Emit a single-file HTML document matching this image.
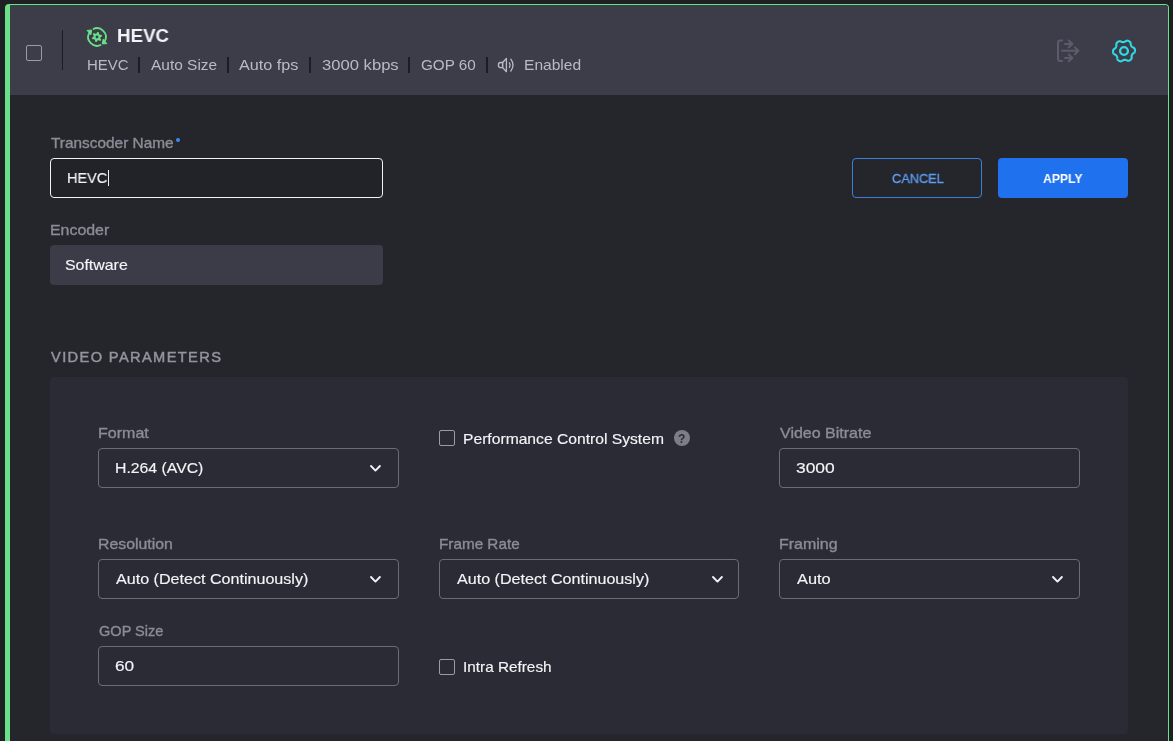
<!DOCTYPE html>
<html><head><meta charset="utf-8"><style>
html,body{margin:0;padding:0;width:1173px;height:741px;overflow:hidden;background:#1f2023;}
.abs{position:absolute;}
.t{position:absolute;white-space:nowrap;line-height:1.117;transform-origin:0 0;will-change:transform;font-family:"Liberation Sans",sans-serif;}
</style></head><body>
<div class="abs" style="left:5px;top:4px;width:1164px;height:760px;box-sizing:border-box;border-top:1px solid #6ae089;border-left:5px solid #6ae089;border-right:1px solid #6ae089;border-radius:4px 4px 0 0;background:#25262b;overflow:hidden">
  <div class="abs" style="left:0;top:0;right:0;height:90px;background:#3d3d4a"></div>
</div>
<!-- header items -->
<div class="abs" style="left:26px;top:45px;width:16px;height:16px;box-sizing:border-box;border:1.5px solid #9b9ba6;border-radius:2px"></div>
<div class="abs" style="left:62px;top:30px;width:1px;height:40px;background:#1c1c21"></div>
<div class="abs" style="left:138px;top:57px;width:2px;height:16px;background:#1c1c21"></div><div class="abs" style="left:227px;top:57px;width:2px;height:16px;background:#1c1c21"></div><div class="abs" style="left:309px;top:57px;width:2px;height:16px;background:#1c1c21"></div><div class="abs" style="left:408px;top:57px;width:2px;height:16px;background:#1c1c21"></div><div class="abs" style="left:486px;top:57px;width:2px;height:16px;background:#1c1c21"></div>
<svg class="abs" style="left:82px;top:22px" width="30" height="30" viewBox="0 0 30 30">
<g fill="none" stroke="#6ae089" stroke-width="1.75" stroke-linecap="butt">
<path d="M10.87 7.23 A8.8 8.8 0 0 1 22.77 19.13"/>
<path d="M19.13 22.77 A8.8 8.8 0 0 1 7.23 10.87"/>
</g>
<path d="M21.2 17.2 L24.9 21.6 L20.3 21.9 Z" fill="#6ae089" stroke="#6ae089" stroke-width="1" stroke-linejoin="round"/>
<path d="M8.8 12.8 L5.1 8.4 L9.7 8.1 Z" fill="#6ae089" stroke="#6ae089" stroke-width="1" stroke-linejoin="round"/>
<path d="M18.86 15.00 L18.75 15.07 L18.67 15.13 L18.61 15.19 L18.57 15.25 L18.54 15.31 L18.52 15.37 L18.50 15.43 L18.48 15.49 L18.47 15.55 L18.45 15.61 L18.44 15.67 L18.42 15.73 L18.41 15.79 L18.40 15.85 L18.38 15.91 L18.37 15.97 L18.35 16.03 L18.34 16.09 L18.33 16.15 L18.32 16.21 L18.32 16.27 L18.32 16.34 L18.33 16.41 L18.36 16.49 L18.40 16.59 L18.47 16.69 L18.55 16.81 L18.66 16.95 L18.78 17.09 L18.89 17.24 L18.98 17.39 L19.04 17.53 L19.08 17.65 L19.09 17.76 L19.09 17.86 L19.07 17.95 L19.03 18.04 L19.00 18.12 L18.95 18.20 L18.90 18.27 L18.85 18.34 L18.79 18.41 L18.73 18.48 L18.67 18.54 L18.60 18.60 L18.54 18.66 L18.47 18.72 L18.39 18.77 L18.31 18.81 L18.23 18.85 L18.14 18.88 L18.04 18.89 L17.93 18.89 L17.80 18.86 L17.66 18.80 L17.51 18.72 L17.35 18.62 L17.20 18.52 L17.05 18.42 L16.93 18.34 L16.82 18.28 L16.72 18.24 L16.64 18.22 L16.57 18.22 L16.50 18.22 L16.44 18.23 L16.38 18.24 L16.32 18.26 L16.26 18.28 L16.20 18.29 L16.14 18.31 L16.08 18.33 L16.02 18.35 L15.96 18.36 L15.91 18.38 L15.85 18.40 L15.79 18.42 L15.73 18.44 L15.67 18.46 L15.61 18.48 L15.56 18.51 L15.50 18.54 L15.44 18.59 L15.38 18.65 L15.33 18.74 L15.27 18.85 L15.21 18.98 L15.14 19.15 L15.08 19.32 L15.00 19.49 L14.92 19.64 L14.83 19.76 L14.75 19.86 L14.66 19.93 L14.57 19.97 L14.47 20.00 L14.38 20.01 L14.29 20.02 L14.20 20.02 L14.12 20.01 L14.03 20.00 L13.94 19.99 L13.85 19.97 L13.77 19.95 L13.68 19.92 L13.60 19.89 L13.51 19.86 L13.43 19.82 L13.36 19.78 L13.28 19.72 L13.21 19.66 L13.15 19.58 L13.10 19.48 L13.06 19.35 L13.04 19.21 L13.03 19.03 L13.04 18.85 L13.05 18.66 L13.07 18.49 L13.07 18.34 L13.07 18.22 L13.05 18.12 L13.03 18.03 L13.00 17.97 L12.96 17.91 L12.92 17.86 L12.88 17.81 L12.84 17.77 L12.79 17.73 L12.75 17.68 L12.70 17.64 L12.66 17.60 L12.61 17.56 L12.57 17.52 L12.52 17.48 L12.48 17.43 L12.43 17.39 L12.39 17.35 L12.34 17.31 L12.29 17.27 L12.24 17.24 L12.18 17.20 L12.11 17.18 L12.03 17.16 L11.93 17.15 L11.80 17.16 L11.65 17.17 L11.48 17.20 L11.30 17.22 L11.11 17.24 L10.94 17.25 L10.79 17.24 L10.67 17.21 L10.56 17.16 L10.48 17.11 L10.41 17.04 L10.35 16.97 L10.30 16.90 L10.26 16.82 L10.22 16.74 L10.18 16.66 L10.15 16.58 L10.12 16.49 L10.10 16.41 L10.08 16.32 L10.06 16.23 L10.05 16.14 L10.04 16.05 L10.04 15.96 L10.05 15.87 L10.07 15.78 L10.11 15.69 L10.17 15.59 L10.26 15.50 L10.38 15.40 L10.52 15.31 L10.69 15.23 L10.85 15.14 L11.01 15.07 L11.14 15.00 L11.25 14.93 L11.33 14.87 L11.39 14.81 L11.43 14.75 L11.46 14.69 L11.48 14.63 L11.50 14.57 L11.52 14.51 L11.53 14.45 L11.55 14.39 L11.56 14.33 L11.58 14.27 L11.59 14.21 L11.60 14.15 L11.62 14.09 L11.63 14.03 L11.65 13.97 L11.66 13.91 L11.67 13.85 L11.68 13.79 L11.68 13.73 L11.68 13.66 L11.67 13.59 L11.64 13.51 L11.60 13.41 L11.53 13.31 L11.45 13.19 L11.34 13.05 L11.22 12.91 L11.11 12.76 L11.02 12.61 L10.96 12.47 L10.92 12.35 L10.91 12.24 L10.91 12.14 L10.93 12.05 L10.97 11.96 L11.00 11.88 L11.05 11.80 L11.10 11.73 L11.15 11.66 L11.21 11.59 L11.27 11.52 L11.33 11.46 L11.40 11.40 L11.46 11.34 L11.53 11.28 L11.61 11.23 L11.69 11.19 L11.77 11.15 L11.86 11.12 L11.96 11.11 L12.07 11.11 L12.20 11.14 L12.34 11.20 L12.49 11.28 L12.65 11.38 L12.80 11.48 L12.95 11.58 L13.07 11.66 L13.18 11.72 L13.28 11.76 L13.36 11.78 L13.43 11.78 L13.50 11.78 L13.56 11.77 L13.62 11.76 L13.68 11.74 L13.74 11.72 L13.80 11.71 L13.86 11.69 L13.92 11.67 L13.98 11.65 L14.04 11.64 L14.09 11.62 L14.15 11.60 L14.21 11.58 L14.27 11.56 L14.33 11.54 L14.39 11.52 L14.44 11.49 L14.50 11.46 L14.56 11.41 L14.62 11.35 L14.67 11.26 L14.73 11.15 L14.79 11.02 L14.86 10.85 L14.92 10.68 L15.00 10.51 L15.08 10.36 L15.17 10.24 L15.25 10.14 L15.34 10.07 L15.43 10.03 L15.53 10.00 L15.62 9.99 L15.71 9.98 L15.80 9.98 L15.88 9.99 L15.97 10.00 L16.06 10.01 L16.15 10.03 L16.23 10.05 L16.32 10.08 L16.40 10.11 L16.49 10.14 L16.57 10.18 L16.64 10.22 L16.72 10.28 L16.79 10.34 L16.85 10.42 L16.90 10.52 L16.94 10.65 L16.96 10.79 L16.97 10.97 L16.96 11.15 L16.95 11.34 L16.93 11.51 L16.93 11.66 L16.93 11.78 L16.95 11.88 L16.97 11.97 L17.00 12.03 L17.04 12.09 L17.08 12.14 L17.12 12.19 L17.16 12.23 L17.21 12.27 L17.25 12.32 L17.30 12.36 L17.34 12.40 L17.39 12.44 L17.43 12.48 L17.48 12.52 L17.52 12.57 L17.57 12.61 L17.61 12.65 L17.66 12.69 L17.71 12.73 L17.76 12.76 L17.82 12.80 L17.89 12.82 L17.97 12.84 L18.07 12.85 L18.20 12.84 L18.35 12.83 L18.52 12.80 L18.70 12.78 L18.89 12.76 L19.06 12.75 L19.21 12.76 L19.33 12.79 L19.44 12.84 L19.52 12.89 L19.59 12.96 L19.65 13.03 L19.70 13.10 L19.74 13.18 L19.78 13.26 L19.82 13.34 L19.85 13.42 L19.88 13.51 L19.90 13.59 L19.92 13.68 L19.94 13.77 L19.95 13.86 L19.96 13.95 L19.96 14.04 L19.95 14.13 L19.93 14.22 L19.89 14.31 L19.83 14.41 L19.74 14.50 L19.62 14.60 L19.48 14.69 L19.31 14.77 L19.15 14.86 L18.99 14.93 L18.86 15.00Z" fill="#6ae089"/>
<circle cx="15" cy="15" r="1.45" fill="#3d3d4a"/>
</svg>
<svg class="abs" style="left:492px;top:52px" width="30" height="26" viewBox="0 0 30 26">
<g fill="none" stroke="#b9b9c8" stroke-width="1.3" stroke-linecap="round" stroke-linejoin="round">
<path d="M10.6 10.5 H8.6 Q6.4 10.5 6.4 13.05 Q6.4 15.6 8.6 15.6 H10.6 Z"/><path d="M10.6 10.5 L14.4 6.5 V19.7 L10.6 15.6 Z"/>
<path d="M17.4 10.9 Q18.9 13.1 17.4 15.3"/>
<path d="M18.8 7.2 Q23.2 13.1 18.8 19"/>
</g></svg>
<svg class="abs" style="left:1052px;top:36px" width="32" height="30" viewBox="0 0 32 30">
<g fill="none" stroke="#5b5b6b" stroke-width="2" stroke-linecap="round" stroke-linejoin="round">
<path d="M10 4.6 H8 Q6 4.6 6 6.6 V22.9 Q6 24.9 8 24.9 H10"/>
<path d="M13 7.9 H20.4 M16.8 4.5 L20.4 7.9 L16.8 11.3"/>
<path d="M10 14.8 H26.4 M22.9 11.4 L26.4 14.8 L22.9 18.2"/>
<path d="M13 21.9 H20.4 M16.8 18.5 L20.4 21.9 L16.8 25.3"/>
</g></svg>
<svg class="abs" style="left:1108px;top:35px" width="32" height="32" viewBox="0 0 32 32">
<path d="M26.97 16.00 L26.95 16.19 L26.92 16.38 L26.88 16.57 L26.83 16.76 L26.76 16.94 L26.68 17.12 L26.57 17.30 L26.44 17.47 L26.29 17.63 L26.12 17.79 L25.94 17.93 L25.74 18.07 L25.54 18.20 L25.35 18.33 L25.17 18.46 L25.00 18.58 L24.85 18.71 L24.71 18.83 L24.60 18.96 L24.49 19.09 L24.39 19.22 L24.30 19.35 L24.22 19.49 L24.14 19.63 L24.07 19.76 L24.00 19.90 L23.93 20.04 L23.87 20.18 L23.81 20.33 L23.75 20.48 L23.70 20.63 L23.66 20.79 L23.62 20.95 L23.60 21.12 L23.58 21.31 L23.57 21.50 L23.58 21.71 L23.59 21.93 L23.61 22.16 L23.63 22.40 L23.64 22.64 L23.64 22.88 L23.62 23.11 L23.59 23.33 L23.53 23.53 L23.46 23.72 L23.37 23.90 L23.26 24.07 L23.15 24.22 L23.03 24.37 L22.89 24.51 L22.76 24.65 L22.61 24.77 L22.46 24.89 L22.31 25.01 L22.15 25.12 L21.99 25.22 L21.83 25.32 L21.66 25.42 L21.49 25.50 L21.31 25.58 L21.13 25.65 L20.95 25.71 L20.76 25.76 L20.57 25.79 L20.37 25.81 L20.16 25.80 L19.95 25.78 L19.73 25.73 L19.52 25.66 L19.30 25.57 L19.08 25.47 L18.86 25.37 L18.66 25.26 L18.46 25.17 L18.27 25.08 L18.08 25.02 L17.91 24.96 L17.73 24.92 L17.57 24.90 L17.41 24.88 L17.25 24.87 L17.09 24.86 L16.93 24.86 L16.78 24.87 L16.62 24.88 L16.47 24.89 L16.31 24.91 L16.16 24.93 L16.00 24.95 L15.84 24.99 L15.68 25.03 L15.52 25.08 L15.36 25.14 L15.19 25.22 L15.02 25.31 L14.84 25.42 L14.66 25.54 L14.47 25.67 L14.27 25.81 L14.07 25.94 L13.86 26.06 L13.66 26.15 L13.45 26.23 L13.24 26.29 L13.04 26.32 L12.84 26.33 L12.65 26.33 L12.45 26.30 L12.26 26.27 L12.07 26.23 L11.89 26.17 L11.71 26.11 L11.53 26.04 L11.35 25.97 L11.18 25.89 L11.01 25.80 L10.84 25.71 L10.67 25.61 L10.51 25.50 L10.36 25.39 L10.21 25.27 L10.06 25.14 L9.93 25.00 L9.80 24.85 L9.69 24.68 L9.59 24.50 L9.51 24.31 L9.44 24.10 L9.39 23.88 L9.36 23.64 L9.34 23.40 L9.32 23.16 L9.31 22.93 L9.29 22.71 L9.26 22.50 L9.23 22.31 L9.19 22.13 L9.14 21.96 L9.08 21.81 L9.02 21.66 L8.94 21.51 L8.87 21.37 L8.79 21.24 L8.71 21.11 L8.62 20.98 L8.53 20.85 L8.44 20.72 L8.35 20.60 L8.25 20.48 L8.14 20.36 L8.02 20.24 L7.90 20.13 L7.76 20.02 L7.61 19.91 L7.45 19.81 L7.26 19.71 L7.07 19.61 L6.86 19.51 L6.64 19.41 L6.43 19.30 L6.22 19.18 L6.03 19.05 L5.86 18.91 L5.71 18.76 L5.58 18.60 L5.47 18.43 L5.38 18.26 L5.30 18.08 L5.24 17.90 L5.18 17.71 L5.13 17.53 L5.10 17.34 L5.07 17.15 L5.04 16.96 L5.03 16.77 L5.02 16.58 L5.01 16.38 L5.02 16.19 L5.03 16.00 L5.05 15.81 L5.08 15.62 L5.12 15.43 L5.17 15.24 L5.24 15.06 L5.32 14.88 L5.43 14.70 L5.56 14.53 L5.71 14.37 L5.88 14.21 L6.06 14.07 L6.26 13.93 L6.46 13.80 L6.65 13.67 L6.83 13.54 L7.00 13.42 L7.15 13.29 L7.29 13.17 L7.40 13.04 L7.51 12.91 L7.61 12.78 L7.70 12.65 L7.78 12.51 L7.86 12.37 L7.93 12.24 L8.00 12.10 L8.07 11.96 L8.13 11.82 L8.19 11.67 L8.25 11.52 L8.30 11.37 L8.34 11.21 L8.38 11.05 L8.40 10.88 L8.42 10.69 L8.43 10.50 L8.42 10.29 L8.41 10.07 L8.39 9.84 L8.37 9.60 L8.36 9.36 L8.36 9.12 L8.38 8.89 L8.41 8.67 L8.47 8.47 L8.54 8.28 L8.63 8.10 L8.74 7.93 L8.85 7.78 L8.97 7.63 L9.11 7.49 L9.24 7.35 L9.39 7.23 L9.54 7.11 L9.69 6.99 L9.85 6.88 L10.01 6.78 L10.17 6.68 L10.34 6.58 L10.51 6.50 L10.69 6.42 L10.87 6.35 L11.05 6.29 L11.24 6.24 L11.43 6.21 L11.63 6.19 L11.84 6.20 L12.05 6.22 L12.27 6.27 L12.48 6.34 L12.70 6.43 L12.92 6.53 L13.14 6.63 L13.34 6.74 L13.54 6.83 L13.73 6.92 L13.92 6.98 L14.09 7.04 L14.27 7.08 L14.43 7.10 L14.59 7.12 L14.75 7.13 L14.91 7.14 L15.07 7.14 L15.22 7.13 L15.38 7.12 L15.53 7.11 L15.69 7.09 L15.84 7.07 L16.00 7.05 L16.16 7.01 L16.32 6.97 L16.48 6.92 L16.64 6.86 L16.81 6.78 L16.98 6.69 L17.16 6.58 L17.34 6.46 L17.53 6.33 L17.73 6.19 L17.93 6.06 L18.14 5.94 L18.34 5.85 L18.55 5.77 L18.76 5.71 L18.96 5.68 L19.16 5.67 L19.35 5.67 L19.55 5.70 L19.74 5.73 L19.93 5.77 L20.11 5.83 L20.29 5.89 L20.47 5.96 L20.65 6.03 L20.82 6.11 L20.99 6.20 L21.16 6.29 L21.33 6.39 L21.49 6.50 L21.64 6.61 L21.79 6.73 L21.94 6.86 L22.07 7.00 L22.20 7.15 L22.31 7.32 L22.41 7.50 L22.49 7.69 L22.56 7.90 L22.61 8.12 L22.64 8.36 L22.66 8.60 L22.68 8.84 L22.69 9.07 L22.71 9.29 L22.74 9.50 L22.77 9.69 L22.81 9.87 L22.86 10.04 L22.92 10.19 L22.98 10.34 L23.06 10.49 L23.13 10.63 L23.21 10.76 L23.29 10.89 L23.38 11.02 L23.47 11.15 L23.56 11.28 L23.65 11.40 L23.75 11.52 L23.86 11.64 L23.98 11.76 L24.10 11.87 L24.24 11.98 L24.39 12.09 L24.55 12.19 L24.74 12.29 L24.93 12.39 L25.14 12.49 L25.36 12.59 L25.57 12.70 L25.78 12.82 L25.97 12.95 L26.14 13.09 L26.29 13.24 L26.42 13.40 L26.53 13.57 L26.62 13.74 L26.70 13.92 L26.76 14.10 L26.82 14.29 L26.87 14.47 L26.90 14.66 L26.93 14.85 L26.96 15.04 L26.97 15.23 L26.98 15.42 L26.99 15.62 L26.98 15.81 L26.97 16.00Z" fill="none" stroke="#2fd8e3" stroke-width="2.1" stroke-linejoin="round"/>
<circle cx="16" cy="16" r="3.9" fill="none" stroke="#2fd8e3" stroke-width="2.3"/></svg>
<!-- form -->
<div class="abs" style="left:175.7px;top:137.7px;width:4px;height:4px;border-radius:50%;background:#3b8af5"></div>
<div class="abs" style="left:50px;top:158px;width:333px;height:40px;box-sizing:border-box;border:1.5px solid #f2f2f6;border-radius:4px;background:#222328"></div>
<div class="abs" style="left:108px;top:170px;width:1.2px;height:16px;background:#f2f2f6"></div>
<div class="abs" style="left:50px;top:245px;width:333px;height:40px;border-radius:4px;background:#3c3c48"></div>
<div class="abs" style="left:852px;top:158px;width:130px;height:40px;box-sizing:border-box;border:1.3px solid #3d7fd8;border-radius:4px"></div>
<div class="abs" style="left:998px;top:158px;width:130px;height:40px;border-radius:4px;background:#2071ee"></div>
<!-- panel -->
<div class="abs" style="left:50px;top:377px;width:1078px;height:357px;border-radius:4px;background:#2b2b35"></div>
<div class="abs" style="left:98px;top:448px;width:301px;height:40px;box-sizing:border-box;border:1.2px solid #6c6c79;border-radius:4px"></div>
<svg class="abs" style="left:369.4px;top:463.6px" width="14" height="10" viewBox="0 0 14 10"><path d="M2 2 L6.45 6.6 L10.9 2" fill="none" stroke="#f0f0f5" stroke-width="1.9" stroke-linecap="round" stroke-linejoin="round"/></svg>
<div class="abs" style="left:779px;top:448px;width:301px;height:40px;box-sizing:border-box;border:1.2px solid #6c6c79;border-radius:4px"></div>
<div class="abs" style="left:98px;top:559px;width:301px;height:40px;box-sizing:border-box;border:1.2px solid #6c6c79;border-radius:4px"></div>
<svg class="abs" style="left:369.4px;top:574.6px" width="14" height="10" viewBox="0 0 14 10"><path d="M2 2 L6.45 6.6 L10.9 2" fill="none" stroke="#f0f0f5" stroke-width="1.9" stroke-linecap="round" stroke-linejoin="round"/></svg>
<div class="abs" style="left:439px;top:559px;width:300px;height:40px;box-sizing:border-box;border:1.2px solid #6c6c79;border-radius:4px"></div>
<svg class="abs" style="left:710.8px;top:574.6px" width="14" height="10" viewBox="0 0 14 10"><path d="M2 2 L6.45 6.6 L10.9 2" fill="none" stroke="#f0f0f5" stroke-width="1.9" stroke-linecap="round" stroke-linejoin="round"/></svg>
<div class="abs" style="left:779px;top:559px;width:301px;height:40px;box-sizing:border-box;border:1.2px solid #6c6c79;border-radius:4px"></div>
<svg class="abs" style="left:1051.2px;top:574.6px" width="14" height="10" viewBox="0 0 14 10"><path d="M2 2 L6.45 6.6 L10.9 2" fill="none" stroke="#f0f0f5" stroke-width="1.9" stroke-linecap="round" stroke-linejoin="round"/></svg>
<div class="abs" style="left:98px;top:646px;width:301px;height:40px;box-sizing:border-box;border:1.2px solid #6c6c79;border-radius:4px"></div>
<div class="abs" style="left:439px;top:430px;width:16px;height:16px;box-sizing:border-box;border:1.5px solid #9b9ba6;border-radius:2px"></div><div class="abs" style="left:439px;top:659px;width:16px;height:16px;box-sizing:border-box;border:1.5px solid #9b9ba6;border-radius:2px"></div><div class="abs" style="left:674px;top:430.3px;width:16px;height:16px;border-radius:50%;background:#7d7d89"></div>
<div class="t" style="left:678.3px;top:433.34px;font-size:12px;font-weight:bold;color:#2b2b35">?</div>
<div class="t" style="left:117.41px;top:24.80px;font-size:19px;font-weight:bold;color:#f4f4f8;transform:scaleX(0.9853);letter-spacing:0px;">HEVC</div>
<div class="t" style="left:86.87px;top:56.98px;font-size:14.5px;font-weight:normal;color:#b9b9c8;transform:scaleX(1.0306);letter-spacing:0px;">HEVC</div>
<div class="t" style="left:150.70px;top:56.98px;font-size:14.5px;font-weight:normal;color:#b9b9c8;transform:scaleX(1.0661);letter-spacing:0px;">Auto Size</div>
<div class="t" style="left:239.40px;top:56.98px;font-size:14.5px;font-weight:normal;color:#b9b9c8;transform:scaleX(1.1162);letter-spacing:0px;">Auto fps</div>
<div class="t" style="left:321.50px;top:56.98px;font-size:14.5px;font-weight:normal;color:#b9b9c8;transform:scaleX(1.1460);letter-spacing:0px;">3000 kbps</div>
<div class="t" style="left:420.50px;top:56.98px;font-size:14.5px;font-weight:normal;color:#b9b9c8;transform:scaleX(1.0512);letter-spacing:0px;">GOP 60</div>
<div class="t" style="left:523.63px;top:56.98px;font-size:14.5px;font-weight:normal;color:#b9b9c8;transform:scaleX(1.0738);letter-spacing:0px;">Enabled</div>
<div class="t" style="left:51.10px;top:135.08px;font-size:14.5px;font-weight:normal;color:#8c8c97;transform:scaleX(1.0612);letter-spacing:0px;-webkit-text-stroke:0.35px #8c8c97;">Transcoder Name</div>
<div class="t" style="left:67.03px;top:170.43px;font-size:15px;font-weight:normal;color:#f4f4f8;transform:scaleX(0.9671);letter-spacing:0px;-webkit-text-stroke:0.15px #f4f4f8;">HEVC</div>
<div class="t" style="left:50.10px;top:222.18px;font-size:14.5px;font-weight:normal;color:#8c8c97;transform:scaleX(1.0963);letter-spacing:0px;-webkit-text-stroke:0.35px #8c8c97;">Encoder</div>
<div class="t" style="left:65.30px;top:257.43px;font-size:15px;font-weight:normal;color:#f4f4f8;transform:scaleX(1.0603);letter-spacing:0px;-webkit-text-stroke:0.15px #f4f4f8;">Software</div>
<div class="t" style="left:891.50px;top:172.33px;font-size:13px;font-weight:normal;color:#5e9ef5;transform:scaleX(0.9827);letter-spacing:0px;-webkit-text-stroke:0.3px #5e9ef5;">CANCEL</div>
<div class="t" style="left:1043.20px;top:172.13px;font-size:13px;font-weight:bold;color:#ffffff;transform:scaleX(0.9370);letter-spacing:0px;">APPLY</div>
<div class="t" style="left:50.60px;top:349.53px;font-size:14px;font-weight:normal;color:#94949f;transform:scaleX(1.0467);letter-spacing:1.3px;-webkit-text-stroke:0.45px #94949f;">VIDEO PARAMETERS</div>
<div class="t" style="left:97.90px;top:424.88px;font-size:14.5px;font-weight:normal;color:#8c8c97;transform:scaleX(1.1049);letter-spacing:0px;-webkit-text-stroke:0.35px #8c8c97;">Format</div>
<div class="t" style="left:115.35px;top:459.93px;font-size:15px;font-weight:normal;color:#f4f4f8;transform:scaleX(1.0528);letter-spacing:0px;-webkit-text-stroke:0.15px #f4f4f8;">H.264 (AVC)</div>
<div class="t" style="left:462.76px;top:430.73px;font-size:15px;font-weight:normal;color:#f4f4f8;transform:scaleX(1.0436);letter-spacing:0px;-webkit-text-stroke:0.15px #f4f4f8;">Performance Control System</div>
<div class="t" style="left:780.40px;top:424.88px;font-size:14.5px;font-weight:normal;color:#8c8c97;transform:scaleX(1.1041);letter-spacing:0px;-webkit-text-stroke:0.35px #8c8c97;">Video Bitrate</div>
<div class="t" style="left:796.40px;top:459.93px;font-size:15px;font-weight:normal;color:#f4f4f8;transform:scaleX(1.1597);letter-spacing:0px;-webkit-text-stroke:0.15px #f4f4f8;">3000</div>
<div class="t" style="left:97.91px;top:535.98px;font-size:14.5px;font-weight:normal;color:#8c8c97;transform:scaleX(1.0912);letter-spacing:0px;-webkit-text-stroke:0.35px #8c8c97;">Resolution</div>
<div class="t" style="left:115.90px;top:571.42px;font-size:15px;font-weight:normal;color:#f4f4f8;transform:scaleX(1.0728);letter-spacing:0px;-webkit-text-stroke:0.15px #f4f4f8;">Auto (Detect Continuously)</div>
<div class="t" style="left:438.95px;top:535.98px;font-size:14.5px;font-weight:normal;color:#8c8c97;transform:scaleX(1.0532);letter-spacing:0px;-webkit-text-stroke:0.35px #8c8c97;">Frame Rate</div>
<div class="t" style="left:456.70px;top:571.42px;font-size:15px;font-weight:normal;color:#f4f4f8;transform:scaleX(1.0728);letter-spacing:0px;-webkit-text-stroke:0.15px #f4f4f8;">Auto (Detect Continuously)</div>
<div class="t" style="left:778.90px;top:535.98px;font-size:14.5px;font-weight:normal;color:#8c8c97;transform:scaleX(1.1014);letter-spacing:0px;-webkit-text-stroke:0.35px #8c8c97;">Framing</div>
<div class="t" style="left:797.30px;top:571.42px;font-size:15px;font-weight:normal;color:#f4f4f8;transform:scaleX(1.0913);letter-spacing:0px;-webkit-text-stroke:0.15px #f4f4f8;">Auto</div>
<div class="t" style="left:99.00px;top:623.18px;font-size:14.5px;font-weight:normal;color:#8c8c97;transform:scaleX(1.0031);letter-spacing:0px;-webkit-text-stroke:0.35px #8c8c97;">GOP Size</div>
<div class="t" style="left:115.40px;top:658.32px;font-size:15px;font-weight:normal;color:#f4f4f8;transform:scaleX(1.1504);letter-spacing:0px;-webkit-text-stroke:0.15px #f4f4f8;">60</div>
<div class="t" style="left:463.18px;top:658.52px;font-size:15px;font-weight:normal;color:#f4f4f8;transform:scaleX(1.0215);letter-spacing:0px;-webkit-text-stroke:0.15px #f4f4f8;">Intra Refresh</div>
</body></html>
